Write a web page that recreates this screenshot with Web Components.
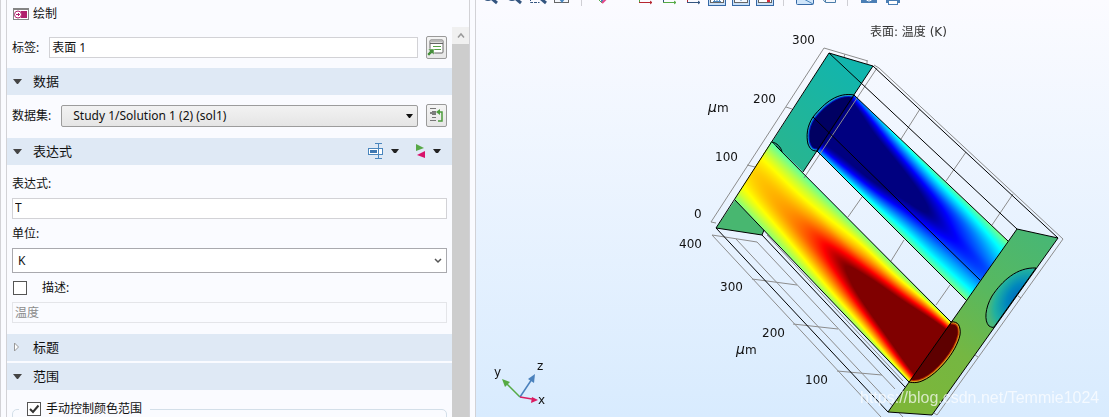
<!DOCTYPE html>
<html lang="zh-CN">
<head>
<meta charset="utf-8">
<title>绘制</title>
<style>
html, body { margin: 0; height: 100%; overflow: hidden; }
body { font: 12px/20px "Noto Sans", "Noto Sans CJK SC", sans-serif; color: #111; }
</style>
</head>
<body>
<app-window></app-window>
<script>
const define = (name, html, setup) => {
  const template = document.createElement('template');
  template.innerHTML = html;
  customElements.define(name, class extends HTMLElement {
    constructor() {
      super();
      this.attachShadow({ mode: 'open' }).append(template.content.cloneNode(true));
    }
    connectedCallback() { if (setup) setup(this, this.shadowRoot); }
  });
};

define('icon-button', `
<style>
:host { display: block; flex: none; }
button { display: block; width: 21px; height: 23px; padding: 0; border: 1px solid #9a9a9a; border-radius: 2px;
  background: linear-gradient(#f4f4f4, #e6e6e6); }
</style>
<button type="button"><slot></slot></button>`, (el, root) => {
  root.querySelector('button').setAttribute('aria-label', el.getAttribute('label'));
});

define('text-field', `
<style>
:host { display: flex; align-items: center; gap: 10px; flex: 1; min-width: 0; }
:host([stacked]) { flex-direction: column; align-items: stretch; gap: 4px; }
:host([bare]) label { display: none; }
label { flex: none; white-space: nowrap; }
input { flex: 1 0 auto; width: 0; box-sizing: border-box; height: 21px; border: 1px solid #d2d2d6; padding: 0 2px 2px; margin: 0;
  font: inherit; line-height: 17px; color: inherit; background: #fff; border-radius: 0; }
:host([stacked]) input { width: 100%; flex: none; }
input:disabled { color: #8c8c8c; background: #fafbff; border-color: #e4e5e9; }
</style>
<label for="f"></label><input id="f" type="text">`, (el, root) => {
  const input = root.querySelector('input');
  root.querySelector('label').textContent = el.getAttribute('label');
  input.value = el.getAttribute('value');
  input.disabled = el.hasAttribute('disabled');
  if (el.hasAttribute('bare')) input.setAttribute('aria-label', el.getAttribute('label'));
});

define('select-field', `
<style>
:host { display: flex; align-items: center; gap: 10px; flex: 1; min-width: 0; }
:host([stacked]) { flex-direction: column; align-items: stretch; gap: 4px; }
label { flex: none; white-space: nowrap; }
.box { position: relative; flex: 1; display: flex; }
select { appearance: none; width: 100%; height: 22px; box-sizing: border-box; margin: 0; padding: 0 24px 0 11px;
  border: 1px solid #9c9c9c; border-radius: 2px; font: inherit; color: inherit; background: linear-gradient(#f2f2f2, #e5e5e5); }
svg { position: absolute; right: 5px; top: 50%; margin-top: -4px; pointer-events: none; }
.chevron { display: none; }
:host([stacked]) select { height: 25px; padding-left: 5px; background: #fff; border-color: #a9a9ae; border-radius: 0; }
:host([stacked]) .chevron { display: block; }
:host([stacked]) .solid { display: none; }
</style>
<label for="f"></label>
<div class="box"><select id="f"><option></option></select>
<svg class="solid" width="8" height="8"><path d="M1 2h7L5 6H4z" fill="#111"/></svg>
<svg class="chevron" width="8" height="8"><path d="M1 2l3 3 3-3" fill="none" stroke="#555" stroke-width="1.5"/></svg></div>`,
(el, root) => {
  root.querySelector('label').textContent = el.getAttribute('label');
  root.querySelector('option').textContent = el.getAttribute('value');
});

define('check-field', `
<style>
:host { display: flex; align-items: center; height: 20px; white-space: nowrap; }
.box { position: relative; width: 14px; height: 14px; }
input { appearance: none; display: block; width: 14px; height: 14px; margin: 0; box-sizing: border-box; border: 1px solid #555; background: #fff; }
svg { position: absolute; left: 0; top: 0; display: none; pointer-events: none; }
input:checked + svg { display: block; }
label { padding-left: var(--label-gap, 15px); }
</style>
<span class="box"><input id="c" type="checkbox"><svg width="14" height="14"><path d="M3 7l3 3 5.500-6.500" fill="none" stroke="#333" stroke-width="2"/></svg></span>
<label for="c"></label>`, (el, root) => {
  root.querySelector('label').textContent = el.getAttribute('label');
  root.querySelector('input').checked = el.hasAttribute('checked');
});

define('form-section', `
<style>
:host { display: block; }
header { display: flex; align-items: center; height: 27px; background: #dfe9f5; padding-right: 11px; }
h2 { flex: 1; margin: 0; font-size: 13px; font-weight: 400; }
h2 button { display: flex; align-items: center; gap: 11px; border: 0; margin: 0; padding: 0 0 2px 5px; background: none;
  font: inherit; line-height: 20px; color: inherit; }
.closed { display: none; }
:host([collapsed]) .closed { display: block; }
:host([collapsed]) .open { display: none; }
.content { padding: 9px 5px 11px; display: flex; flex-direction: column; gap: 5px; }
:host([collapsed]) .content { padding: 0; height: 2px; }
</style>
<header><h2><button type="button">
<svg class="open" width="10" height="10"><path d="M1 3h9L6 8H5z" fill="#444"/></svg>
<svg class="closed" width="10" height="10"><path d="M2.500 1v8L6.500 5z" fill="#fff" stroke="#999"/></svg>
<span></span></button></h2><slot name="actions"></slot></header>
<div class="content"><slot></slot></div>`, (el, root) => {
  root.querySelector('span').textContent = el.getAttribute('heading');
  root.querySelector('h2 button').setAttribute('aria-expanded', String(!el.hasAttribute('collapsed')));
});

define('menu-button', `
<style>
:host { display: block; }
button { display: flex; align-items: center; gap: 7px; border: 0; padding: 0 0 2px; margin: 0 0 0 15px; background: none; }
</style>
<button type="button"><slot></slot><svg width="8" height="8"><path d="M0 2h8L5 6H3z" fill="#222"/></svg></button>`, (el, root) => {
  root.querySelector('button').setAttribute('aria-label', el.getAttribute('label'));
});

define('scroll-bar', `
<style>
:host { display: block; width: 17px; background: #cdcdcd; flex: none; }
button { display: block; width: 17px; height: 17px; border: 0; padding: 0; background: #f0f0f0; }
svg { display: block; }
</style>
<button type="button" aria-label="向上滚动"><svg width="17" height="17"><path d="M6 10.500l3-3.500 3 3.500" fill="none" stroke="#999" stroke-width="1.500"/></svg></button>`);

define('settings-panel', `
<style>
:host { display: flex; flex-direction: column; box-sizing: border-box; background: #fafbff; overflow: hidden;
  border-left: 1px solid #d2d2d6; border-right: 1px solid #d2d2d6; }
.toolbar { flex: none; height: 27px; padding-left: 6px; display: flex; align-items: center; }
.toolbar button { display: flex; align-items: center; gap: 4px; border: 0; padding: 0; margin: 0; background: none; font: inherit; color: inherit; line-height: 20px; }
.body { flex: 1; min-height: 0; display: flex; }
.form { flex: 1; min-width: 0; overflow: hidden; }
.row { display: flex; align-items: center; gap: 8px; }
.top { padding: 9px 5px; }
fieldset { margin: 0; padding: 0 0 0 6px; min-width: 0; height: 60px; border: 1px solid #d3dfe9; border-radius: 5px; }
legend { padding: 0 8px; --label-gap: 5px; }
</style>
<div class="toolbar"><button type="button">
<svg width="16" height="14"><rect x=".5" y="1.500" width="15" height="11" fill="#fff" stroke="#858585"/><path d="M0 2h16" stroke="#858585" stroke-width="2"/><rect x="8" y="4" width="6" height="7" fill="#b0206c"/><circle cx="5" cy="7.500" r="3.500" fill="#fff" stroke="#b0206c"/><path d="M3 7.500h4M5.500 6v3" stroke="#b0206c"/></svg>
<span>绘制</span></button></div>
<div class="body"><div class="form">
<div class="row top"><text-field label="标签:" value="表面 1"></text-field>
<icon-button label="转到源"><svg width="19" height="21"><rect x="3" y="3" width="13" height="13" rx="1" fill="#fff" stroke="#666"/><path d="M3 4.500h13" stroke="#bbb" stroke-width="2"/><path d="M3 6.500h13" stroke="#666"/><path d="M6 9.500h8M6 12.500h8" stroke="#55a045"/><path d="M1 12h6v6l-2-2-3 3-2-2 3-3z" fill="#468f3b" stroke="#f0f0f0" stroke-width=".5"/></svg></icon-button></div>
<form-section heading="数据"><div class="row"><select-field label="数据集:" value="Study 1/Solution 1 (2) (sol1)"></select-field>
<icon-button label="转到源"><svg width="19" height="21"><path d="M3 3.500h6M5 6.500h4M5 9.500h4M5 12.500h4M3 15.500h6" stroke="#777"/><path d="M3 8h6" stroke="#111"/><path d="M11 16h4V7h-4" fill="none" stroke="#4c9c3d" stroke-width="1.500"/><path d="M9 7l4-3v6z" fill="#4c9c3d"/></svg></icon-button></div></form-section>
<form-section heading="表达式">
<menu-button slot="actions" label="替换表达式"><svg width="17" height="18"><rect x="1.500" y="6.500" width="14" height="6" fill="#fff" stroke="#4b86bd"/><rect x="3" y="8" width="7" height="3" fill="#3f78b2"/><path d="M11.500 2v14M8 1.500h7M8 16.500h7" stroke="#4b86bd"/></svg></menu-button>
<menu-button slot="actions" label="插入表达式"><svg width="12" height="16"><path d="M2 1l8 4-8 3z" fill="#57a846"/><path d="M11 8v7l-8-3z" fill="#d8126a"/></svg></menu-button>
<text-field stacked label="表达式:" value="T"></text-field>
<select-field stacked label="单位:" value="K"></select-field>
<check-field label="描述:" style="padding-left:1px;margin-bottom:-1px"></check-field>
<text-field stacked bare disabled label="描述" value="温度"></text-field>
</form-section>
<form-section heading="标题" collapsed></form-section>
<form-section heading="范围"><fieldset><legend><check-field checked label="手动控制颜色范围"></check-field></legend></fieldset></form-section>
</div><scroll-bar></scroll-bar></div>`);

define('tool-button', `
<style>
:host { display: block; flex: none; }
button { display: block; border: 0; padding: 0; width: 24px; height: 20px; background: none; }
</style><button type="button"><slot></slot></button>`, (el, root) => {
  root.querySelector('button').setAttribute('aria-label', el.getAttribute('label'));
});

define('plot-toolbar', `
<style>
:host { display: flex; align-items: flex-end; height: 6px; overflow: hidden; padding-left: 3px; }
i { flex: none; width: 1px; height: 6px; background: #cfcfd4; margin: 0 9px 0 6px; }
.menu { width: 18px; flex: none; }
svg { display: block; fill: none; stroke: #33557f; }
</style>
<tool-button label="放大"><svg width="24" height="20"><circle cx="9" cy="9" r="5" stroke-width="2"/><path d="M12 12l6 5" stroke-width="3"/></svg></tool-button>
<tool-button label="缩小"><svg width="24" height="20"><circle cx="9" cy="9" r="5" stroke-width="2"/><path d="M12 12l6 5" stroke-width="3"/></svg></tool-button>
<tool-button label="缩放框"><svg width="24" height="20"><path d="M3.500 4v12.500h9" stroke-dasharray="3 1"/><circle cx="11" cy="9" r="4" stroke-width="2"/><path d="M13 12l6 5" stroke-width="3"/></svg></tool-button>
<tool-button label="缩放到范围"><svg width="24" height="20"><rect x="3.500" y="3.500" width="14" height="13" fill="#f4f7fc" stroke="#666"/><path d="M8 13h6l-3 4z" fill="#4b86bd" stroke="none"/></svg></tool-button>
<i></i>
<tool-button label="默认视图"><svg width="24" height="20"><path d="M7 13l4 4" stroke="#55aa44"/><path d="M11 10v6" stroke="#4b86bd" stroke-width="2"/><path d="M11 17l4-4" stroke="#e2498a" stroke-width="2"/></svg></tool-button>
<span class="menu"></span>
<tool-button label="xy 视图"><svg width="24" height="20"><path d="M6.500 3v13" stroke="#55aa44"/><path d="M6 16.500h13M17 15l2 1.500-2 1.500" stroke="#b62630"/></svg></tool-button>
<tool-button label="yz 视图"><svg width="24" height="20"><path d="M6.500 3v13" stroke="#33557f"/><path d="M6 16.500h13M17 15l2 1.500-2 1.500" stroke="#55aa44"/></svg></tool-button>
<tool-button label="zx 视图"><svg width="24" height="20"><path d="M6.500 3v13" stroke="#b62630"/><path d="M6 16.500h13M17 15l2 1.500-2 1.500"/></svg></tool-button>
<tool-button label="网格"><svg width="24" height="20"><rect x="3.500" y="1.500" width="17" height="18" fill="#c9e0f7" stroke="#3568a5"/><rect x="5.500" y="3.500" width="13" height="13" fill="#fff" stroke="#666"/><path d="M8 15.500h8M9.500 5v10M12 5v10M14.500 5v10" stroke="#4b86bd"/></svg></tool-button>
<tool-button label="坐标方向"><svg width="24" height="20"><rect x="3.500" y="1.500" width="17" height="18" fill="#c9e0f7" stroke="#3568a5"/><rect x="5.500" y="3.500" width="13" height="13" fill="#f7faff" stroke="#666"/><path d="M12 5v10" stroke="#4b86bd"/></svg></tool-button>
<tool-button label="图例"><svg width="24" height="20"><rect x="3.500" y="1.500" width="17" height="18" fill="#c9e0f7" stroke="#3568a5"/><rect x="5.500" y="3.500" width="13" height="13" fill="#fff" stroke="#666"/><path d="M15.500 5v11" stroke="#dc2939" stroke-width="3"/></svg></tool-button>
<i></i>
<tool-button label="场景光"><svg width="24" height="20"><rect x="3.500" y="1.500" width="17" height="17" rx="1" fill="#cfe5fa" stroke="#3568a5"/><path d="M9 12l11 6" stroke="#4b86bd"/></svg></tool-button>
<tool-button label="透明"><svg width="24" height="20"><path d="M5.500 13l3 3.500h10V5" fill="#f4f7fc" stroke="#4b7da9"/><path d="M8.500 5v11" stroke="#4b7da9"/></svg></tool-button>
<i></i>
<tool-button label="快照"><svg width="24" height="20"><rect x="4" y="6" width="16" height="11" fill="#4b7fb5" stroke="none"/><circle cx="12" cy="12" r="3" stroke="#fff"/></svg></tool-button>
<tool-button label="打印"><svg width="24" height="20"><path d="M5 7h14v10H5z" fill="#4b7fb5" stroke="none"/><rect x="7.500" y="14.500" width="9" height="4" fill="#fff" stroke="#4b7fb5"/></svg></tool-button>`);

/* Temperature samples on each cylinder: rows run along the axis, columns run across it. */
const SURFACES = [
  { top: [772, 142, 951, 322], bottom: [735, 200, 909, 382], grid: [
    [.46, .54, .61, .65, .67, .66, .63, .58, .50],
    [.47, .56, .63, .70, .75, .75, .69, .60, .51],
    [.50, .62, .73, .88, .99, .93, .80, .66, .52],
    [.50, .70, .93, 1.12, 1.25, 1.18, 1.00, .76, .52],
    [.55, 1.00, 1.25, 1.30, 1.30, 1.30, 1.25, 1.00, .55]] },
  { top: [854, 95, 1008, 241], bottom: [817, 151, 966, 300], grid: [
    [.22, -.05, -.10, -.10, -.10, -.10, -.05, .03, .30],
    [.40, .17, .00, -.10, -.12, -.10, .00, .18, .42],
    [.46, .29, .12, .00, -.05, .04, .17, .32, .47],
    [.47, .34, .22, .15, .11, .16, .26, .36, .48],
    [.50, .40, .33, .26, .20, .22, .30, .39, .51]] }
];
const jet = v => [3, 2, 1].map(k => {
  const c = Math.min(4 * v - k + 1.5, -4 * v + k + 1.5);
  return 255 * Math.max(0, Math.min(1, c));
});
/* Catmull-Rom interpolation through evenly spaced values, position in 0..1. */
const spline = (values, position) => {
  const last = values.length - 1;
  const p = Math.max(0, Math.min(1, position)) * last;
  const i = Math.min(last - 1, Math.floor(p)), u = p - i;
  const b = values[i], c = values[i + 1];
  const a = i > 0 ? values[i - 1] : 2 * b - c;
  const d = i + 2 <= last ? values[i + 2] : 2 * c - b;
  return b + .5 * u * (c - a + u * (2 * a - 5 * b + 4 * c - d + u * (3 * (b - c) + d - a)));
};
const sample = (grid, s, t) => spline(grid.map(row => spline(row, t)), s);
const paintSurfaces = (canvas, left, top) => {
  const ctx = canvas.getContext('2d');
  const image = ctx.createImageData(canvas.width, canvas.height);
  for (const { top: a, bottom: b, grid } of SURFACES) {
    const side = (l, x, y) => (l[2] - l[0]) * (y - l[1]) - (l[3] - l[1]) * (x - l[0]);
    const start = [a[0], a[1], b[0], b[1]], end = [a[2], a[3], b[2], b[3]];
    for (let py = 0; py < canvas.height; py++) for (let px = 0; px < canvas.width; px++) {
      const x = px + left + .5, y = py + top + .5;
      const d0 = side(a, x, y), d1 = -side(b, x, y), e0 = -side(start, x, y), e1 = side(end, x, y);
      if (d0 < 0 || d1 < 0 || e0 < -70 || e1 < -70) continue;
      const rgb = jet(Math.max(0, Math.min(1, sample(grid, e0 / (e0 + e1), d0 / (d0 + d1)))));
      image.data.set([...rgb, 255], (py * canvas.width + px) * 4);
    }
  }
  ctx.putImageData(image, 0, 0);
};

define('surface-plot', `
<style>
:host { display: grid; }
canvas, svg { grid-area: 1 / 1; display: block; width: 100%; height: auto; }
text { font: 12px "DejaVu Sans", "Noto Sans CJK SC", sans-serif; fill: #111; }
.mu { font-style: italic; font-size: 14px; }
.grid { fill: none; stroke: #8c8c8c; }
.edge { fill: none; stroke: #000; stroke-width: 1; }
.title { fill: #333; }
.mark { font: 16px "Liberation Sans", sans-serif; fill: #fff; fill-opacity: .7; }
</style>
<canvas width="633" height="411"></canvas>
<svg viewBox="476 6 633 411">
<defs>
<linearGradient id="block" gradientUnits="userSpaceOnUse" x1="1040" y1="233" x2="910" y2="413"><stop stop-color="#48b774"/><stop offset=".35" stop-color="#58b85f"/><stop offset=".65" stop-color="#75b742"/><stop offset="1" stop-color="#7db638"/></linearGradient>
<linearGradient id="teal" gradientUnits="userSpaceOnUse" x1="860" y1="75" x2="785" y2="165"><stop stop-color="#12b5ad"/><stop offset="1" stop-color="#29b58e"/></linearGradient>
<radialGradient id="spot" gradientUnits="userSpaceOnUse" cx="0" cy="0" r="1" gradientTransform="translate(1018 297) rotate(-55) scale(38 24)"><stop stop-color="#0068bc"/><stop offset=".4" stop-color="#0088bd"/><stop offset=".8" stop-color="#20b0a0"/><stop offset="1" stop-color="#4ab77a"/></radialGradient>
<clipPath id="cold"><path d="M854 95C838 92 825 102 813 117C807 126 806 136 808 144C810 149 812 151 817 151L818 151L855 95Z"/></clipPath>
<clipPath id="hot"><path d="M951 322C958 321 961 326 960 335C956 353 937 374 924 380C918 383 914 383 909 382Z"/></clipPath>
</defs>
<g class="grid">
<path d="M716 223L711 222L824 48L868 61M786 107l6 2M747 165l8 2M845 54l-1 3M867 61v3"/>
<path d="M877 68L804 178M874 65L879 68L1063 239L937 415L934 413M1018 296l3 2M975 355l3 2M920 109L901 139M966 152L946 181M1013 194L992 225M862 197L848 217M904 240L891 261M950 285L936 305"/>
<path d="M881 417L712 235L757 242L895 389M736 239L903 417M752 279L797 285M793 324L838 329M837 371L882 375M767 235L903 381"/>
</g>
<path d="M829 53L873 66L803 172L772 142Z" fill="url(#teal)"/>
<path d="M735 200L716 228L762 235L764 230Z" fill="#48b770"/>
<path d="M1017 229L1058 238L932 415L888 412Z" fill="url(#block)"/>
<path class="edge" d="M1036 268C1017 267 1002 281 992 296C985 308 984 321 989 326C991 327 993 328 994 327Z" style="fill:url(#spot)"/>
<g clip-path="url(#cold)"><path d="M800 85h60v70h-60z" fill="#000062"/><path d="M854 95C838 92 825 102 813 117C807 126 806 136 808 144C810 149 812 151 817 151" fill="none" stroke="#0019ca" stroke-width="5"/><path d="M854 95C838 92 825 102 813 117C807 126 806 136 808 144C810 149 812 151 817 151" fill="none" stroke="#10a5c4" stroke-width="3"/></g>
<g clip-path="url(#hot)"><path d="M905 320h60v70h-60z" fill="#5e0000"/><path d="M951 322C958 321 961 326 960 335C956 353 937 374 924 380C918 383 914 383 909 382" fill="none" stroke="#b92400" stroke-width="5"/><path d="M951 322C958 321 961 326 960 335C956 353 937 374 924 380C918 383 914 383 909 382" fill="none" stroke="#d2a51c" stroke-width="3"/></g>
<g class="edge">
<path d="M829 53L873 66L803 172M829 53L716 228L762 235L764 230M829 53L1017 229L1058 238L873 66M1058 238L932 415L888 412L1017 229M716 228L888 412M762 235L905 387"/>
<path d="M772 142L951 322M735 200L909 382M854 95L1008 241M817 151L966 300M813 117L980 280"/>
<path d="M854 95C838 92 825 102 813 117C807 126 806 136 808 144C810 149 812 151 817 151M951 322C958 321 961 326 960 335C956 353 937 374 924 380C918 383 914 383 909 382"/>
<path d="M772 142C777 143 781 147 782 152L776 146" fill="#229477"/>
</g>
<text x="792" y="44">300</text><text x="753" y="103">200</text><text x="715" y="161">100</text><text x="694" y="218">0</text>
<text x="679" y="248">400</text><text x="720" y="291">300</text><text x="762" y="337">200</text><text x="805" y="384">100</text>
<text x="708" y="112"><tspan class="mu">μ</tspan>m</text><text x="736" y="354"><tspan class="mu">μ</tspan>m</text>
<text class="title" x="870" y="36">表面: 温度 (K)</text>
<g fill="none" stroke-width="1.500"><path d="M520 397L507 384" stroke="#55aa44"/><path d="M520 397L532 379" stroke="#4b82bd"/><path d="M520 397L532 399" stroke="#db1b60"/></g>
<path d="M502 379l8 3-5 5z" fill="#55aa44"/><path d="M535 374l-1 9-6-4z" fill="#4b82bd"/><path d="M538 400l-7 3 1-6z" fill="#db1b60"/>
<text x="494" y="376">y</text><text x="537" y="370">z</text><text x="538" y="404">x</text>
<text class="mark" x="860" y="403">https://blog.csdn.net/Temmie1024</text>
</svg>`, (el, root) => paintSurfaces(root.querySelector('canvas'), 476, 6));

define('app-window', `
<style>
:host { display: flex; height: 100vh; box-sizing: border-box; background: #fafbff; border-left: 1px solid #d2d2d6; }
settings-panel { flex: none; width: 464px; margin: 0 5px; }
main { flex: 1; min-width: 0; overflow: hidden; border-left: 1px solid #d2d2d6; background: linear-gradient(#fbfbff, #d8ebfe); }
</style>
<settings-panel></settings-panel>
<main><plot-toolbar></plot-toolbar><surface-plot></surface-plot></main>`);
</script>
</body>
</html>
